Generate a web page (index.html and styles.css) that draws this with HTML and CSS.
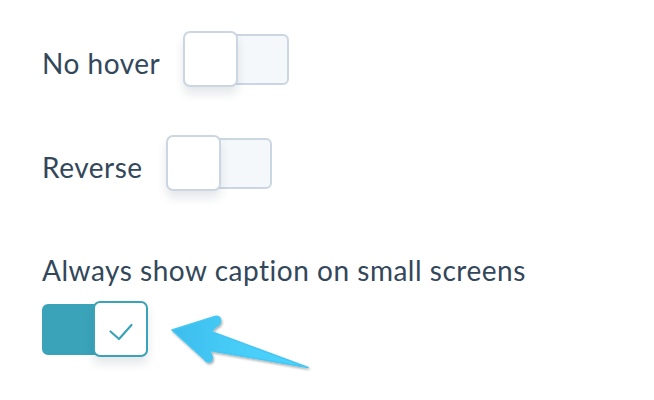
FILE: index.html
```html
<!DOCTYPE html>
<html>
<head>
<meta charset="utf-8">
<link rel="stylesheet" href="styles.css">
</head>
<body>
<div class="page">
  <div class="row row-first">
    <span class="label">No hover</span>
    <div class="switch">
      <div class="track"></div>
      <div class="knob"></div>
    </div>
  </div>
  <div class="row row-second">
    <span class="label">Reverse</span>
    <div class="switch">
      <div class="track"></div>
      <div class="knob"></div>
    </div>
  </div>
  <div class="stack">
    <span class="label label-block">Always show caption on small screens</span>
    <div class="switch on">
      <div class="track"></div>
      <div class="knob">
        <svg class="check" width="53" height="56" viewBox="0 0 53 56"><path d="M15.5 28.5 L24 36 L36.5 22" fill="none" stroke="#3aa3ba" stroke-width="2.2" stroke-linecap="round" stroke-linejoin="round"/></svg>
      </div>
    </div>
  </div>
  <svg class="arrow" width="160" height="70" viewBox="160 305 160 70">
    <defs>
      <linearGradient id="ag" x1="0" y1="0" x2="1" y2="0">
        <stop offset="0" stop-color="#3dbdec"/>
        <stop offset="0.5" stop-color="#47cdf8"/>
        <stop offset="1" stop-color="#4fd4fb"/>
      </linearGradient>
      <filter id="sh" x="-10%" y="-20%" width="130%" height="150%">
        <feDropShadow dx="1" dy="1.5" stdDeviation="0.8" flood-color="#000" flood-opacity="0.35"/>
      </filter>
    </defs>
    <path d="M172 330 L215 316.5 Q220 315.5 220.5 320 Q221 324 217 326 L211 331.5 L308 367.5 L209.5 350.5 L212 356 Q213 361 209 362 Q206 362.5 204.5 359.5 Z" fill="url(#ag)" stroke="#44c6f4" stroke-width="1.5" stroke-linejoin="round" filter="url(#sh)"/>
  </svg>
</div>
</body>
</html>
```
FILE: styles.css
```css
html, body {
  margin: 0;
  padding: 0;
  background: #ffffff;
}
.page {
  position: relative;
  width: 654px;
  height: 400px;
  padding: 31px 0 0 42px;
  box-sizing: border-box;
  font-family: Lato, "Open Sans", sans-serif;
  color: #33475b;
}
.row {
  display: flex;
  align-items: center;
  gap: 23px;
}
.row-second {
  margin-top: 48px;
}
.label {
  font-size: 28px;
  line-height: 34px;
  letter-spacing: 0.52px;
  padding-top: 7px;
}
.stack {
  margin-top: 62px;
  display: flex;
  flex-direction: column;
  align-items: flex-start;
}
.label-block {
  padding-top: 0;
}
.switch {
  position: relative;
  width: 106px;
  height: 56px;
  display: flex;
  align-items: center;
}
.stack .switch {
  margin-top: 14px;
}
.track {
  width: 100%;
  height: 51px;
  box-sizing: border-box;
  border: 2px solid #cbd6e2;
  border-radius: 6px;
  background: #f5f8fa;
}
.knob {
  position: absolute;
  top: 0;
  left: 0;
  width: 55px;
  height: 56px;
  box-sizing: border-box;
  border: 2px solid #cbd6e2;
  border-radius: 7px;
  background: #ffffff;
  box-shadow: 0 7px 10px rgba(45, 62, 80, 0.12);
}
.switch.on .track {
  background: #3aa3ba;
  border-color: #3aa3ba;
}
.switch.on .knob {
  left: auto;
  right: 0;
  border-color: #3aa3ba;
}
.check {
  display: block;
}
.arrow {
  position: absolute;
  left: 160px;
  top: 305px;
}
```
